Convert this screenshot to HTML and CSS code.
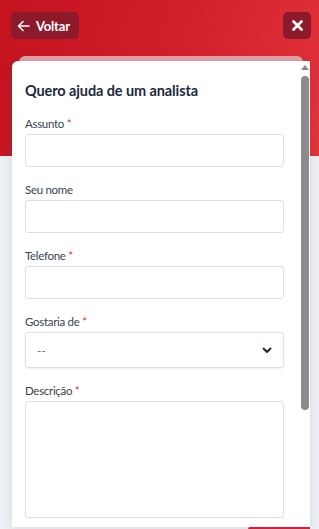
FILE: index.html
```html
<!DOCTYPE html>
<html lang="pt-BR">
<head>
    <meta charset="UTF-8">
    <meta name="viewport" content="width=device-width, initial-scale=1.0">
    <title>Quero ajuda de um analista</title>
    <link rel="stylesheet" href="styles.css">
</head>
<body>
    <div class="hero">
        <div class="topbar">
            <button class="btn-back">
                <svg width="13" height="12" viewBox="0 0 13 12" fill="none" stroke="#fff" stroke-width="1.6" stroke-linecap="round" stroke-linejoin="round">
                    <path d="M12 6H1.5M6 1.5L1.5 6L6 10.5"/>
                </svg>
                Voltar
            </button>
            <button class="btn-close">
                <svg width="11" height="11" viewBox="0 0 11 11" stroke="#fff" stroke-width="2.6" stroke-linecap="round">
                    <path d="M1.5 1.5L9.5 9.5M9.5 1.5L1.5 9.5"/>
                </svg>
            </button>
        </div>
    </div>

    <div class="panel">
        <div class="card">
            <form class="form">
                <h2>Quero ajuda de um analista</h2>

                <div class="field">
                    <label>Assunto <span class="req">*</span></label>
                    <input type="text" class="input">
                </div>
                <div class="field">
                    <label>Seu nome</label>
                    <input type="text" class="input">
                </div>
                <div class="field">
                    <label>Telefone <span class="req">*</span></label>
                    <input type="text" class="input">
                </div>
                <div class="field">
                    <label>Gostaria de <span class="req">*</span></label>
                    <div class="select">
                        <span>--</span>
                        <svg width="10" height="7" viewBox="0 0 10 7" fill="none" stroke="#1d2633" stroke-width="2" stroke-linecap="round" stroke-linejoin="round">
                            <path d="M1.5 1.5L5 5L8.5 1.5"/>
                        </svg>
                    </div>
                </div>
                <div class="field">
                    <label>Descrição <span class="req">*</span></label>
                    <textarea class="textarea"></textarea>
                </div>
            </form>
            <div class="rail">
                <div class="rail-up"></div>
                <div class="rail-thumb"></div>
            </div>
        </div>
        <div class="fab"></div>
    </div>
</body>
</html>
```

FILE: styles.css
```css
body {
    margin: 0;
    height: 529px;
    overflow: hidden;
    background: #eef1f5;
    font-family: Lato, Arial, sans-serif;
}

.hero {
    height: 156px;
    background: linear-gradient(110deg, #c5121f 0%, #d3202d 55%, #e3353c 100%);
}

.topbar {
    display: flex;
    justify-content: space-between;
    padding: 12px 8px 0 11px;
}

.btn-back,
.btn-close {
    height: 27px;
    border: none;
    border-radius: 5px;
    background: #8c1a2b;
    color: #fff;
    display: flex;
    align-items: center;
    cursor: pointer;
}

.btn-back {
    width: 68px;
    padding: 0 0 0 6px;
    gap: 6px;
    font-family: Lato, Arial, sans-serif;
    font-size: 13px;
    font-weight: 700;
    letter-spacing: -0.2px;
}

.btn-close {
    width: 28px;
    justify-content: center;
    padding: 0;
}

.panel {
    position: relative;
    margin: -95px 9px 0 12px;
}

.panel::before {
    content: "";
    position: absolute;
    top: -5px;
    left: 7px;
    right: 7px;
    height: 20px;
    border-radius: 6px 6px 0 0;
    background: #e8a2aa;
}

.card {
    position: relative;
    display: flex;
    height: 466px;
    background: #fff;
    border-radius: 6px 0 0 0;
    box-shadow: 0 0 12px rgba(40, 50, 70, 0.14);
}

.form {
    flex: 1;
    padding: 20px 16px 0 13px;
}

.form h2 {
    margin: 0 0 14px;
    font-size: 14.5px;
    line-height: 20px;
    font-weight: 700;
    letter-spacing: -0.1px;
    color: #1b2a3c;
}

.field {
    display: flex;
    flex-direction: column;
    margin-bottom: 14px;
}

.field label {
    font-size: 11.5px;
    line-height: 18px;
    margin-bottom: 1px;
    letter-spacing: -0.3px;
    color: #3a4350;
}

.req {
    color: #d8303a;
}

.input,
.select,
.textarea {
    box-sizing: border-box;
    border: 1px solid #dce1e8;
    border-radius: 3px;
    background: #fff;
    font-family: inherit;
}

.input {
    height: 33px;
}

.select {
    height: 36px;
    display: flex;
    align-items: center;
    justify-content: space-between;
    padding: 0 11px 0 11px;
    font-size: 12px;
    color: #6b7280;
    box-shadow: 0 1px 2px rgba(0, 0, 0, 0.06);
}

.textarea {
    height: 117px;
    resize: none;
}

.rail {
    width: 9px;
    margin-right: 1px;
    padding-top: 4px;
    display: flex;
    flex-direction: column;
    align-items: center;
}

.rail-up {
    width: 0;
    height: 0;
    border-left: 4px solid transparent;
    border-right: 4px solid transparent;
    border-bottom: 5px solid #8a8a8a;
}

.rail-thumb {
    width: 8px;
    height: 334px;
    margin-top: 6px;
    border-radius: 4px;
    background: #8c8c8c;
}

.fab {
    height: 10px;
    margin-left: 236px;
    background: #e01e3a;
    border-radius: 2px 0 0 0;
}
```
